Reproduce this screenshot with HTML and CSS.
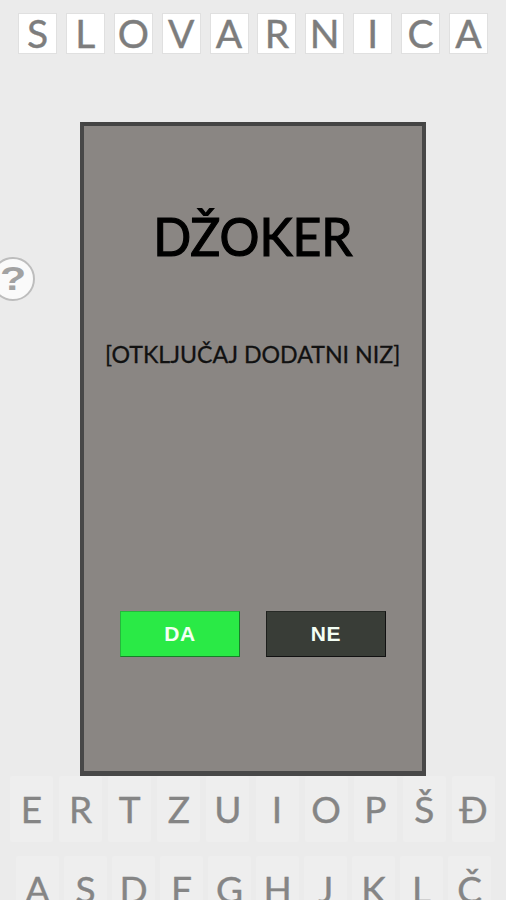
FILE: index.html
```
<!DOCTYPE html>
<html lang="sr-Latn">
<head>
<meta charset="utf-8">
<title>Slovarnica</title>
<link rel="stylesheet" href="styles.css">
</head>
<body>
<div class="app">
  <header class="logo">
    <span>S</span><span>L</span><span>O</span><span>V</span><span>A</span><span>R</span><span>N</span><span>I</span><span>C</span><span>A</span>
  </header>
  <div class="help"><span>?</span></div>
  <main class="dialog">
    <h1><span>DŽOKER</span></h1>
    <p><span>[OTKLJUČAJ DODATNI NIZ]</span></p>
    <div class="actions">
      <button class="yes">DA</button>
      <button class="no">NE</button>
    </div>
  </main>
  <section class="keyboard">
    <div class="keys top">
      <span>E</span><span>R</span><span>T</span><span>Z</span><span>U</span><span>I</span><span>O</span><span>P</span><span>Š</span><span>Đ</span>
    </div>
    <div class="keys middle">
      <span>A</span><span>S</span><span>D</span><span>F</span><span>G</span><span>H</span><span>J</span><span>K</span><span>L</span><span>Č</span>
    </div>
  </section>
</div>
</body>
</html>
```
FILE: styles.css
```
* { box-sizing: border-box; }
body { margin: 0; background: #ebebeb; font-family: Lato, "Liberation Sans", sans-serif; }
.app { position: relative; width: 506px; height: 900px; overflow: hidden; }
.logo { display: flex; justify-content: space-between; padding: 13px 18px 0; height: 122px; }
.logo span {
  width: 39px; height: 41px; background: #fff; border: 1px solid #e0e0e0;
  color: #7d7d7d; font-size: 39px; line-height: 39px; -webkit-text-stroke: .4px #7d7d7d;
  display: flex; justify-content: center;
}
.help {
  position: absolute; left: -9px; top: 257px; width: 44px; height: 44px; border-radius: 50%;
  background: #fafafa; border: 2px solid #bdbdbd; color: #a2a2a2;
  display: flex; align-items: center; justify-content: center;
  font: bold 33px/40px "Liberation Sans", sans-serif;
}
.help span { transform: scaleX(1.3); }
.dialog {
  width: 346px; height: 654px; margin-left: 80px; background: #8a8683;
  border: 4px solid #484848; border-top-color: #444; border-bottom-width: 5px;
  display: flex; flex-direction: column; align-items: center;
}
h1 { margin: 77px 0 0; font-size: 53px; line-height: 66px; font-weight: 400; color: #000; white-space: nowrap; -webkit-text-stroke: 1.2px #000; }
h1 span { display: inline-block; transform: scaleX(.942); }
p { margin: 70px 0 0; font-size: 23px; line-height: 30px; color: #111; white-space: nowrap; -webkit-text-stroke: .3px #111; }
p span { display: inline-block; transform: scaleX(1.007); }
.actions { display: flex; gap: 26px; margin-top: 242px; }
button {
  width: 120px; height: 46px; padding: 0; border: 1px solid; color: #f4fff4;
  font: bold 21px/42px "Liberation Sans", sans-serif; letter-spacing: .7px;
}
.yes { background: #2aea46; border-color: #24b83b #178029 #178029 #24b83b; }
.no { background: #393d37; border-color: #272a26 #111 #111 #1d1f1c; }
.keys { display: flex; justify-content: space-between; }
.keys span {
  width: 43px; height: 66px; background: #eee; border-radius: 2px; color: #858585;
  font-size: 37px; line-height: 66px; text-align: center; -webkit-text-stroke: .4px #858585;
}
.top { padding: 0 11px 0 10px; }
.middle { padding: 0 15px 0 16px; margin-top: 14px; }
```
